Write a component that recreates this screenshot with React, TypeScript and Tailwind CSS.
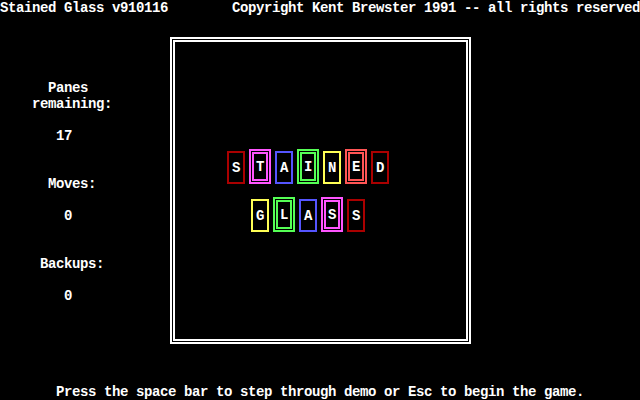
import React from "react";

type T = { ch: string; c: string; d?: boolean };

const row1: T[] = [
  { ch: "S", c: "border-[#aa0000]" },
  { ch: "T", c: "border-[#ff55ff]", d: true },
  { ch: "A", c: "border-[#5555ff]" },
  { ch: "I", c: "border-[#55ff55]", d: true },
  { ch: "N", c: "border-[#ffff55]" },
  { ch: "E", c: "border-[#ff5555]", d: true },
  { ch: "D", c: "border-[#aa0000]" },
];
const row2: T[] = [
  { ch: "G", c: "border-[#ffff55]" },
  { ch: "L", c: "border-[#55ff55]", d: true },
  { ch: "A", c: "border-[#5555ff]" },
  { ch: "S", c: "border-[#ff55ff]", d: true },
  { ch: "S", c: "border-[#aa0000]" },
];

function Tile({ t }: { t: T }) {
  return (
    <div className="w-[24px] h-[48px] flex justify-center items-start">
      {t.d ? (
        <div className={`mt-[5px] w-[22px] h-[35px] border-2 p-[1px] flex ${t.c}`}>
          <div className={`flex-1 border-2 flex items-center justify-center ${t.c}`}>
            {t.ch}
          </div>
        </div>
      ) : (
        <div className={`mt-[7px] w-[18px] h-[33px] border-2 flex items-center justify-center ${t.c}`}>
          {t.ch}
        </div>
      )}
    </div>
  );
}

function Line({ pl, text, mt }: { pl: string; text: string; mt: string }) {
  return <div className={`h-4 whitespace-pre ${pl} ${mt}`}>{text}</div>;
}

export default function App() {
  return (
    <div
      className="w-[640px] h-[400px] bg-black text-white font-bold text-[14px] leading-[16px] tracking-[-0.4px] flex flex-col overflow-hidden"
      style={{ fontFamily: '"Liberation Mono", monospace' }}
    >
      <div className="h-4 flex justify-between whitespace-pre">
        <span>Stained Glass v910116</span>
        <span>Copyright Kent Brewster 1991 -- all rights reserved</span>
      </div>
      <div className="h-[368px] flex">
        <div className="w-[170px] flex flex-col">
          <Line mt="mt-[64px]" pl="pl-[48px]" text="Panes" />
          <Line mt="mt-0" pl="pl-[32px]" text="remaining:" />
          <Line mt="mt-[16px]" pl="pl-[56px]" text="17" />
          <Line mt="mt-[32px]" pl="pl-[48px]" text="Moves:" />
          <Line mt="mt-[16px]" pl="pl-[64px]" text="0" />
          <Line mt="mt-[32px]" pl="pl-[40px]" text="Backups:" />
          <Line mt="mt-[16px]" pl="pl-[64px]" text="0" />
        </div>
        <div className="mt-[21px] w-[301px] h-[307px] border-2 border-white p-[1px] flex">
          <div className="flex-1 border-2 border-white flex flex-col pl-[49px] pt-[102px]">
            <div className="flex">
              {row1.map((t, i) => (
                <Tile key={i} t={t} />
              ))}
            </div>
            <div className="flex pl-[24px]">
              {row2.map((t, i) => (
                <Tile key={i} t={t} />
              ))}
            </div>
          </div>
        </div>
      </div>
      <div className="h-4 whitespace-pre pl-[56px]">
        Press the space bar to step through demo or Esc to begin the game.
      </div>
    </div>
  );
}
